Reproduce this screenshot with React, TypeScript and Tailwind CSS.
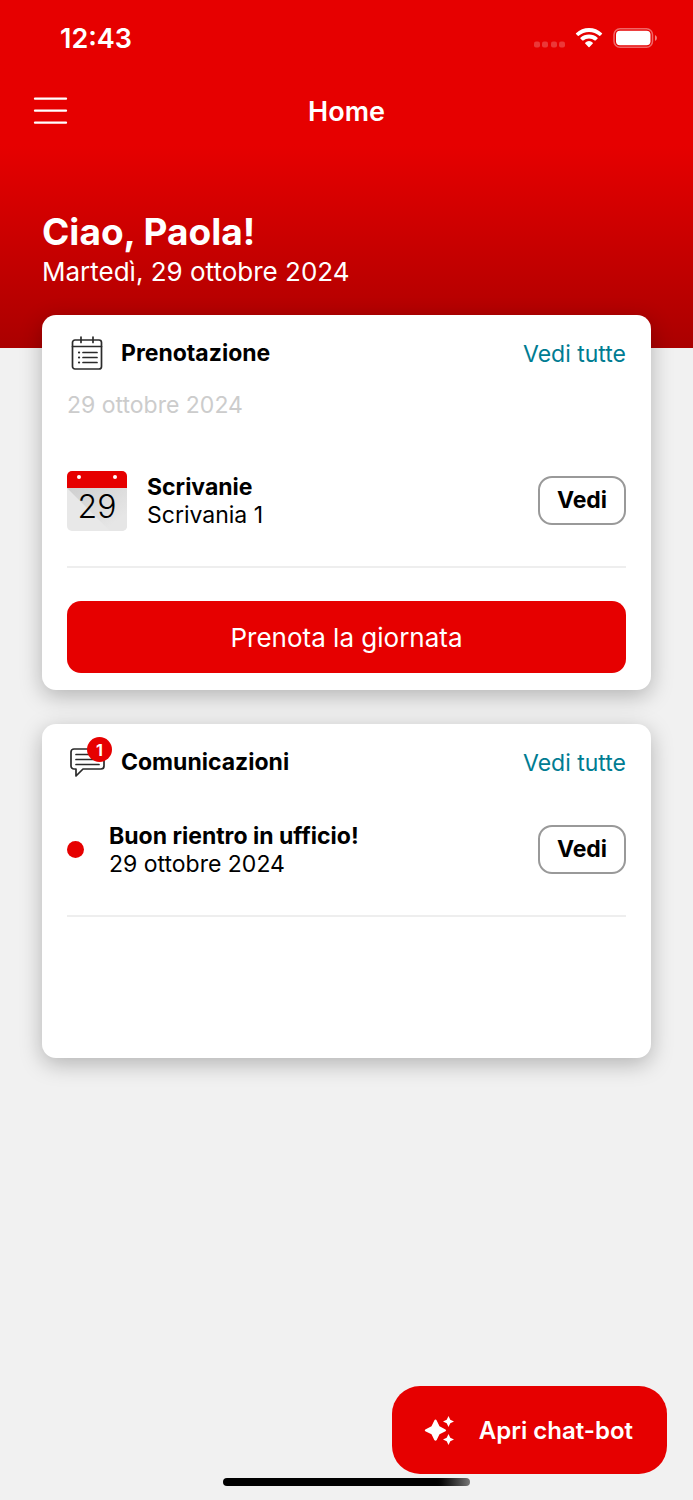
import type { ReactNode } from "react";
import clsx from "clsx";

export default function App() {
  return (
    <div className="flex min-h-screen flex-col bg-[#f1f1f1] font-['Inter','Liberation_Sans',sans-serif] text-black">
      <header className="bg-linear-to-b from-[#e60000] from-42% to-[#aa0000] pb-14 text-white">
        <StatusBar />
        <NavBar title="Home" />
        <div className="mt-16 px-[42px]">
          <h1 className="text-[37px] leading-10 font-bold">Ciao, Paola!</h1>
          <p className="text-[26px] leading-10">Martedì, 29 ottobre 2024</p>
        </div>
      </header>

      <main className="-mt-[33px] flex flex-col gap-[34px] px-[42px]">
        <Card icon={<CalendarIcon />} title="Prenotazione" className="pb-[17px]">
          <p className="mt-4 text-[23px] leading-9 text-[#cccccc]">29 ottobre 2024</p>
          <Row
            className="mt-3 gap-5"
            media={<DayTile day={29} />}
            title="Scrivanie"
            subtitle="Scrivania 1"
          />
          <button className="mt-[33px] h-[72px] w-full rounded-[14px] bg-[#e60000] text-[26px] text-white">
            Prenota la giornata
          </button>
        </Card>

        <Card icon={<MessageIcon count={1} />} title="Comunicazioni" className="pb-[141px]">
          <Row
            className="mt-1 gap-[25px]"
            media={<span className="size-[17px] rounded-full bg-[#e60000]" />}
            title="Buon rientro in ufficio!"
            subtitle="29 ottobre 2024"
          />
        </Card>
      </main>

      <footer className="mt-auto flex flex-col pt-8 pb-[14px]">
        <button className="mr-[26px] flex h-[88px] items-center gap-6 self-end rounded-[28px] bg-[#e60000] pt-[2px] pr-[34px] pl-8 text-[24px] font-semibold text-white">
          <SparklesIcon />
          Apri chat-bot
        </button>
        <div className="mt-1 h-2 w-[247px] self-center rounded-full bg-linear-to-r from-black from-85% to-[#777777]" />
      </footer>
    </div>
  );
}

function StatusBar() {
  return (
    <div className="flex h-[78px] items-center justify-between pr-9 pl-[60px]">
      <span className="text-[27px] font-semibold">12:43</span>
      <svg width="124" height="22" viewBox="0 0 124 22" fill="white">
        <g opacity="0.22">
          <rect x="1" y="13.500" width="6" height="6" rx="2" />
          <rect x="9" y="13.500" width="6" height="6" rx="2" />
          <rect x="18" y="13.500" width="6" height="6" rx="2" />
          <rect x="26" y="13.500" width="6" height="6" rx="2" />
        </g>
        <path d="M43 5.300Q48.500 0 56 0T69 5.300Q69.400 5.700 69 6.100L67.200 7.800Q66.800 8.200 66.300 7.800Q62 3.900 56 3.900T45.700 7.800Q45.200 8.200 44.800 7.800L43 6.100Q42.600 5.700 43 5.300Z" />
        <path d="M47.400 9.700Q51 6.500 56 6.500T64.600 9.700Q65 10.100 64.600 10.500L62.600 12.400Q62.200 12.800 61.700 12.400Q59.300 10.400 56 10.400T50.300 12.400Q49.800 12.800 49.400 12.400L47.400 10.500Q47 10.100 47.400 9.700Z" />
        <path d="M52.200 14.700Q53.800 13.100 56 13.100T59.800 14.700Q60.200 15.100 59.800 15.500L56.500 19Q56 19.500 55.500 19L52.200 15.500Q51.800 15.100 52.200 14.700Z" />
        <rect x="81" y=".800" width="38.500" height="18.500" rx="6" fill="none" stroke="white" strokeOpacity="0.4" strokeWidth="1.500" />
        <rect x="83" y="2.800" width="34.500" height="14.500" rx="4" />
        <path d="M122 7Q124 8 124 10T122 13Z" opacity="0.5" />
      </svg>
    </div>
  );
}

function NavBar({ title }: { title: string }) {
  return (
    <nav className="grid h-[70px] grid-cols-3 items-center px-[33px] pb-[2px]">
      <button aria-label="Menu" className="justify-self-start">
        <svg width="35" height="30" viewBox="0 0 35 30" stroke="white" strokeWidth="2.300" strokeLinecap="round">
          <path d="M2 1.700h31M2 13.700h31M2 25.700h31" />
        </svg>
      </button>
      <span className="text-center text-[27px] font-semibold">{title}</span>
    </nav>
  );
}

interface CardProps {
  icon: ReactNode;
  title: string;
  className?: string;
  children: ReactNode;
}

function Card({ icon, title, className, children }: CardProps) {
  return (
    <section
      className={clsx(
        "rounded-[14px] bg-white px-[25px] pt-5 shadow-[0_6px_22px_rgba(0,0,0,0.26)]",
        className
      )}
    >
      <div className="flex h-9 items-center">
        <div className="w-[54px] shrink-0">{icon}</div>
        <h2 className="flex-1 text-[23px] font-bold">{title}</h2>
        <a href="#" className="pt-[2px] text-[23px] text-[#007c92]">
          Vedi tutte
        </a>
      </div>
      {children}
    </section>
  );
}

interface RowProps {
  media: ReactNode;
  title: string;
  subtitle: string;
  className?: string;
}

function Row({ media, title, subtitle, className }: RowProps) {
  return (
    <div className={clsx("flex h-[133px] items-center border-b-2 border-[#eeeeee]", className)}>
      {media}
      <div className="min-w-0 flex-1 text-[23px] leading-7">
        <h3 className="font-bold">{title}</h3>
        <p>{subtitle}</p>
      </div>
      <button className="h-[49px] w-[88px] rounded-[14px] border-2 border-[#999999] text-[23px] font-bold">
        Vedi
      </button>
    </div>
  );
}

function DayTile({ day }: { day: number }) {
  return (
    <div className="flex size-[60px] flex-col overflow-hidden rounded-[5px]">
      <div className="flex h-[17px] items-start justify-between bg-[#e60000] px-[10px] pt-1">
        <span className="size-[4px] rounded-full bg-white" />
        <span className="size-[4px] rounded-full bg-white" />
      </div>
      <div className="relative flex flex-1 items-center justify-center bg-[#e8e8e8] pb-1 text-[32px] leading-none font-light">
        <svg className="absolute inset-0" width="60" height="43" viewBox="0 0 60 43">
          <defs>
            <linearGradient id="tile-shade" x1="0" y1="0" x2="1" y2="1">
              <stop offset="0" stopColor="#cfcfcf" />
              <stop offset="0.8" stopColor="#e6e6e6" />
            </linearGradient>
          </defs>
          <path d="M0 0h60v43H43Z" fill="url(#tile-shade)" />
        </svg>
        <span className="relative">{day}</span>
      </div>
    </div>
  );
}

function CalendarIcon() {
  return (
    <svg className="ml-1" width="32" height="36" viewBox="0 0 32 36" fill="none" stroke="#2b2b2b" strokeWidth="1.700" strokeLinecap="round">
      <rect x="1.500" y="5" width="29" height="29" rx="2.500" />
      <path d="M1.500 11.500h29M10 2v5.500M22 2v5.500" />
      <path d="M12 17.500h14M12 22.500h14M12 27.500h14" />
      <path d="M8 17.500h.1M8 22.500h.1M8 27.500h.1" strokeWidth="2.200" />
    </svg>
  );
}

function MessageIcon({ count }: { count: number }) {
  return (
    <div className="relative ml-[3px] w-[35px] pt-[2px]">
      <svg width="35" height="30" viewBox="0 0 35 30" fill="none" stroke="#2b2b2b" strokeWidth="1.700" strokeLinecap="round" strokeLinejoin="round">
        <path d="M4 1h27a3 3 0 0 1 3 3v14a3 3 0 0 1-3 3H13L6 28v-7H4a3 3 0 0 1-3-3V4a3 3 0 0 1 3-3Z" />
        <path d="M6 6.500h23M6 11.500h23M6 16.500h23" />
      </svg>
      <span className="absolute -top-[9px] left-[17px] flex size-[25px] items-center justify-center rounded-full bg-[#e60000] text-[16px] font-bold text-white">
        {count}
      </span>
    </div>
  );
}

function SparklesIcon() {
  return (
    <svg width="31" height="30" viewBox="0 0 31 30" fill="white">
      <path d="M11.500 3.500Q12.200 3.500 12.700 4.500L15.500 10.300L21.500 13.500Q22.800 14.300 21.500 15.200L15.500 18.300L12.700 24Q11.500 25.500 10.300 24L7.500 18.300L1.300 15.200Q.2 14.300 1.300 13.500L7.500 10.300L10.300 4.500Q10.800 3.500 11.500 3.500Z" />
      <path d="M24.500 0L26.300 3.700L30 5.500L26.300 7.300L24.500 11L22.700 7.300L19 5.500L22.700 3.700Z" />
      <path d="M24.500 18L26.300 21.700L30 23.500L26.300 25.300L24.500 29L22.700 25.300L19 23.500L22.700 21.700Z" />
    </svg>
  );
}
